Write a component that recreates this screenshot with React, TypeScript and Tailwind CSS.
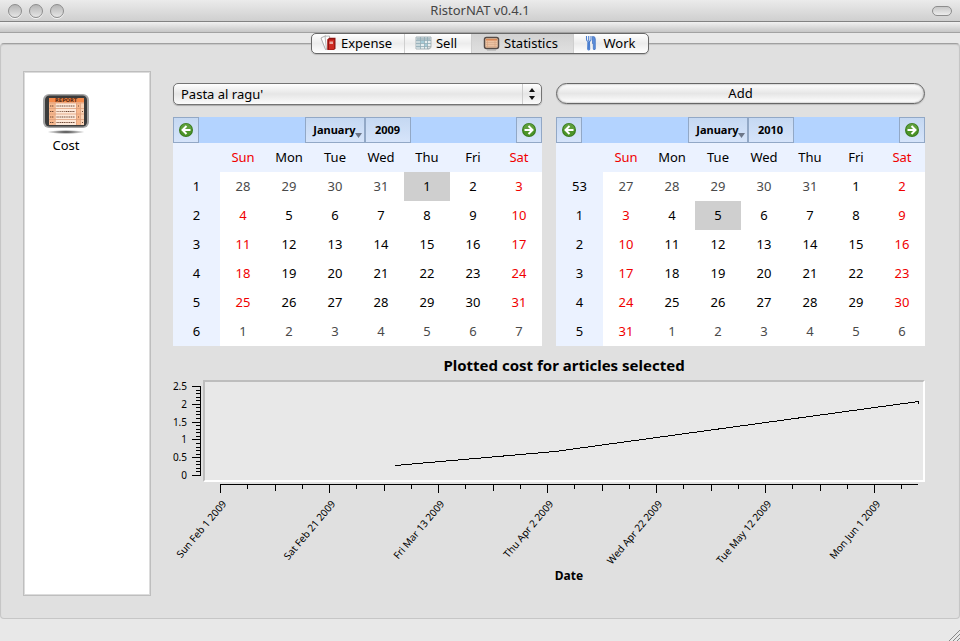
import React from "react";

function ExpenseIcon() {
  return (
    <svg width="17" height="16" viewBox="0 0 17 16" aria-hidden="true">
      <path d="M1 3 5.500 .8 9.500 12 5.500 14.500Z" fill="#fff" stroke="#999" strokeWidth=".8" />
      <path d="M5 1.200 9.500 1 10.500 13 6.500 14.500Z" fill="#fafafa" stroke="#aaa" strokeWidth=".8" />
      <path d="M7.500 4.500 9 2.800H15.500V13.500L14 15H7.500Z" fill="#8e1512" />
      <path d="M7.500 4.500H14.200V14.500H7.500Z" fill="#cf2a22" />
      <path d="M9.500 6.500H13V9H9.500Z" fill="#e9a9a2" />
      <path d="M8.300 4.500V14.500" stroke="#7c0f0d" strokeWidth=".9" />
    </svg>
  );
}

function SellIcon() {
  return (
    <svg width="17" height="16" viewBox="0 0 17 16" aria-hidden="true">
      <path d="M1 2H16V12.500L14 14H1Z" fill="#e6eef0" stroke="#a9b4b8" />
      <path d="M1.500 2.500H15.500V5H1.500Z" fill="#aebfc5" />
      <path d="M1.500 5.500H5V13.500H1.500Z" fill="#c9d8dc" />
      <path d="M1 5.500H16M1 8.500H16M1 11.500H15M5.500 2V14M9.500 2V14M12.500 2V14" stroke="#8fabb5" strokeWidth=".8" />
      <path d="M6 6H9V8H6ZM10 9H12V11H10Z" fill="#a5ccd8" />
      <path d="M13 14V11.500H16Z" fill="#fff" stroke="#98a4a8" strokeWidth=".6" />
    </svg>
  );
}

function StatisticsIcon() {
  return (
    <svg width="17" height="16" viewBox="0 0 17 16" aria-hidden="true">
      <rect x="1.500" y="2.500" width="14" height="11" rx="2" fill="#edc3a2" stroke="#564c48" strokeWidth="1.500" />
      <path d="M3 4H14V5.500H3Z" fill="#d98654" />
      <path d="M3 7.500H14M3 9.500H14M3 11.500H14" stroke="#d5ab8d" strokeWidth=".7" />
      <path d="M4.500 6V12.500M12 6V12.500" stroke="#d9a17e" strokeWidth=".6" />
      <path d="M4 15H13" stroke="#999" strokeWidth=".8" />
    </svg>
  );
}

function WorkIcon() {
  return (
    <svg width="17" height="16" viewBox="0 0 17 16" aria-hidden="true">
      <path d="M4.500 1V4.500Q4.500 6 6 6.500L5.700 14Q6.700 16 7.700 14L7.400 6.500Q9 6 9 4.500V1M6.700 1V6" fill="none" stroke="#4b7fd0" strokeWidth="1.100" />
      <path d="M6.700 7V14.500" stroke="#4b7fd0" strokeWidth="1.800" />
      <path d="M10.500 1.500Q13.300 1 13.300 4V14Q12.300 16 11.300 14V8.500H10.500Z" fill="#5c8fdc" stroke="#3b6bbd" strokeWidth=".7" />
    </svg>
  );
}

function ReportIcon() {
  return (
    <svg width="48" height="42" viewBox="0 0 48 42" aria-hidden="true">
      <defs>
        <radialGradient id="report-shadow">
          <stop offset="0" stopColor="#333" />
          <stop offset="1" stopColor="#333" stopOpacity="0" />
        </radialGradient>
      </defs>
      <ellipse cx="24" cy="39" rx="19" ry="2" fill="url(#report-shadow)" />
      <rect x="1" y="1" width="46" height="34" rx="6" fill="#a4a4a4" />
      <rect x="3" y="2.500" width="42" height="31" rx="4.500" fill="#3b3b3b" />
      <rect x="7" y="5" width="35" height="27" fill="#fbd3b5" />
      <rect x="7" y="5" width="35" height="4.500" fill="#f58b4c" />
      <text x="24" y="9" textAnchor="middle" fontSize="5" fontWeight="700" className="font-['DejaVu_Sans']" fill="#5b2a12">REPORT</text>
      <path d="M7 10H12.500V32H7ZM34 10H38V32H34Z" fill="#f8b88d" />
      <path d="M14 10H34V32H14Z" fill="#fde9da" />
      <path d="M7 10H42M7 15.500H42M7 21H42M7 26.500H42M13 10V32M34.500 10V32M38.500 10V32" stroke="#dda07c" strokeWidth=".8" />
      <path d="M8 13H12M8 18.500H12M8 24H12M8 29.500H12M14.500 13H33M24 18.500H33M14.500 24H33M14.500 29.500H33M36 13H37M40 18.500H41M36 24H37M40 29.500H41" stroke="#6d4734" strokeWidth="1.200" strokeDasharray="1.200 .6" />
      <path d="M14.500 18.500H24" stroke="#94705c" strokeWidth="1.200" strokeDasharray="1.200 .6" />
    </svg>
  );
}

function ArrowIcon({ right = false }: { right?: boolean }) {
  return (
    <svg width="16" height="16" viewBox="0 0 16 16" aria-hidden="true">
      <circle cx="8" cy="8" r="7" fill="#377a1c" />
      <circle cx="8" cy="8" r="6" fill="#4c9428" />
      <path d="M2.500 7A5.500 5.500 0 0 1 13.500 7Q8 9 2.500 7Z" fill="#6ba648" opacity=".6" />
      <path
        d={right ? "M3.500 8H11M7.500 4 11.500 8 7.500 12" : "M12.500 8H5M8.500 4 4.500 8 8.500 12"}
        fill="none"
        stroke="#fff"
        strokeWidth="2"
      />
    </svg>
  );
}

const tabs = [
  { label: "Expense", icon: <ExpenseIcon />, box: "w-[92px]" },
  { label: "Sell", icon: <SellIcon />, box: "w-[67px]" },
  { label: "Statistics", icon: <StatisticsIcon />, box: "w-[102px]" },
  { label: "Work", icon: <WorkIcon />, box: "w-[75px]" },
];

const dayNames = ["Sun", "Mon", "Tue", "Wed", "Thu", "Fri", "Sat"];

type CalendarProps = { year: number; weeks: number[]; first: number; previousLast: number; selected: number };

const navButton = "flex h-[26px] w-[26px] items-center justify-center border border-[#92a8c6] bg-linear-to-b from-[#c5d8f2] to-[#d6e4fa]";
const titleButton = "relative h-[26px] border border-[#92a8c6] bg-linear-to-b from-[#c5d8f2] to-[#d6e4fa] text-[11px] font-bold";

function Calendar({ year, weeks, first, previousLast, selected }: CalendarProps) {
  return (
    <section className="min-w-0" aria-label={`January ${year}`}>
      <div className="flex justify-between bg-[#b3d3ff]">
        <button className={navButton} aria-label="Previous month"><ArrowIcon /></button>
        <div className="flex">
          <button className={`${titleButton} w-[60px]`}>
            January
            <svg className="absolute right-[2px] bottom-1" width="7" height="5" viewBox="0 0 7 5" aria-hidden="true">
              <path d="M0 0H7L3.500 5Z" fill="#6c7688" />
            </svg>
          </button>
          <button className={`${titleButton} w-[46px]`}>{year}</button>
        </div>
        <button className={navButton} aria-label="Next month"><ArrowIcon right /></button>
      </div>
      <table className="w-full table-fixed border-collapse bg-white text-center">
        <thead>
          <tr className="h-[29px] bg-[#ebf2ff]">
            <td className="w-[47px] p-0" />
            {dayNames.map((name, i) => (
              <th key={name} scope="col" className={`p-0 pb-[2px] font-normal ${i % 6 === 0 ? "text-[#f00000]" : ""}`}>{name}</th>
            ))}
          </tr>
        </thead>
        <tbody>
          {weeks.map((week, row) => (
            <tr key={week} className="h-[29px]">
              <th scope="row" className="bg-[#ebf2ff] p-0 pb-[2px] font-normal">{week}</th>
              {dayNames.map((name, col) => {
                const offset = row * 7 + col - first + 1;
                const outside = offset < 1 || offset > 31;
                const day = offset < 1 ? previousLast + offset : offset > 31 ? offset - 31 : offset;
                const color = outside ? "text-[#4a4a4a]" : col % 6 === 0 ? "text-[#f00000]" : "text-black";
                const fill = !outside && day === selected ? "bg-[#cfcfcf]" : "";
                return (
                  <td key={name} className="p-0">
                    <button className={`block h-[29px] w-full pb-[2px] ${color} ${fill}`}>{day}</button>
                  </td>
                );
              })}
            </tr>
          ))}
        </tbody>
      </table>
    </section>
  );
}

const dates = ["Sun Feb 1 2009", "Sat Feb 21 2009", "Fri Mar 13 2009", "Thu Apr 2 2009", "Wed Apr 22 2009", "Tue May 12 2009", "Mon Jun 1 2009"];
const costs = ["0", "0.5", "1", "1.5", "2", "2.5"];

function CostChart() {
  return (
    <svg className="block h-auto w-full overflow-visible" viewBox="0 0 752 190" role="img" aria-label="Cost by date">
      <rect x="30" y="0" width="722" height="102" fill="#fff" />
      <path d="M30 0H752L750 2H32V100L30 102Z" fill="#bdbdbd" />
      <rect x="32" y="2" width="718" height="98" fill="#e8e8e8" />
      <g stroke="#000" shapeRendering="crispEdges" fill="none">
        <path d="M27.500 6V96M47 104.500H745" />
        {Array.from({ length: 26 }, (_, i) => {
          const y = Math.round(95 - i * 3.56) + 0.5;
          return <path key={i} d={`M${i % 5 === 0 ? 19 : 23} ${y}H28`} />;
        })}
        {Array.from({ length: 26 }, (_, i) => {
          const x = Math.round(47 + i * 27.25) + 0.5;
          return <path key={i} d={`M${x} 104V${i % 4 === 0 ? 113 : i % 2 === 0 ? 111 : 109}`} />;
        })}
        <path d="M222 85.500 382 71.500 745.500 21.500V24" />
      </g>
      <g fontSize="10" fill="#000">
        {costs.map((cost, i) => (
          <text key={cost} x="14" y={99 - i * 18 + (i > 2 ? 1 : 0)} textAnchor="end">{cost}</text>
        ))}
        {dates.map((date, i) => (
          <text key={date} textAnchor="end" transform={`translate(${54 + i * 109} 124) rotate(-50)`}>{date}</text>
        ))}
      </g>
    </svg>
  );
}

const light = "h-[14px] w-[14px] rounded-full border border-[#8d8d8d] bg-linear-to-b from-[#b5b5b5] to-[#e6e6e6] shadow-[0_1px_0_#f5f5f5]";

export default function App() {
  return (
    <div className="flex min-h-screen flex-col bg-[#e8e8e8] font-['Noto_Sans','Lucida_Grande',sans-serif] text-[13px] leading-4 text-black">
      <header>
        <div className="grid h-[22px] grid-cols-[1fr_auto_1fr] items-center border-b border-[#838383] bg-linear-to-b from-[#ebebeb] to-[#cfcfcf] px-2">
          <div className="flex gap-[7px]">
            <button className={light} aria-label="Close" />
            <button className={light} aria-label="Minimize" />
            <button className={light} aria-label="Zoom" />
          </div>
          <h1 className="pb-[2px] text-[#454545]">RistorNAT v0.4.1</h1>
          <button aria-label="Toggle toolbar" className="h-[10px] w-5 justify-self-end rounded-full border border-[#8d8d8d] bg-linear-to-b from-[#c8c8c8] to-[#ececec]" />
        </div>
        <div className="h-[11px] border-b border-[#a2a2a2] bg-linear-to-b from-[#f2f2f2] to-[#c6c6c6]" />
      </header>

      <div role="tablist" className="relative z-10 -mb-[11px] flex justify-center">
        <div className="flex h-[21px] overflow-hidden rounded-[5px] border border-[#686868] bg-linear-to-b from-white via-[#ececec] to-white shadow-[0_1px_1px_#bbb]">
          {tabs.map((tab) => (
            <button
              key={tab.label}
              role="tab"
              aria-selected={tab.label === "Statistics"}
              className={`flex ${tab.box} items-center justify-center gap-1 border-l border-[#cfcfcf] pr-1 pb-[2px] first:border-l-0 ${tab.label === "Statistics" ? "bg-linear-to-b from-[#d2d2d2] to-[#e0e0e0]" : ""}`}
            >
              {tab.icon}
              {tab.label}
            </button>
          ))}
        </div>
      </div>

      <div className="flex grow rounded border border-[#c6c6c6] border-t-[#a0a0a0] bg-[#e0e0e0] pt-[27px] pr-[34px] pb-[22px] pl-[22px] shadow-[inset_0_1px_1px_#c6c6c6]">
        <nav className="w-32 shrink-0 border border-[#bebebe] bg-white pt-[21px] pl-[17px] shadow-[inset_0_0_0_1px_#dcdcdc]">
          <button className="flex w-[50px] flex-col items-center gap-[2px]">
            <ReportIcon />
            Cost
          </button>
        </nav>

        <main className="ml-[22px] min-w-0 grow pt-3">
          <div className="grid grid-cols-2 gap-x-[14px] gap-y-3">
            <div className="relative">
              <select
                aria-label="Article"
                className="h-[22px] w-full appearance-none rounded-[5px] border border-[#747474] bg-linear-to-b from-white via-[#e6e6e6] to-[#fbfbfb] px-[7px] shadow-[0_1px_1px_#aaa]"
              >
                <option>Pasta al ragu'</option>
              </select>
              <div className="pointer-events-none absolute inset-y-[1px] right-[2px] flex w-[18px] items-center justify-center border-l border-[#cdcdcd]">
                <svg width="6" height="12" viewBox="0 0 6 12" aria-hidden="true">
                  <path d="M0 4 3 0 6 4ZM0 8 3 12 6 8Z" fill="#111" />
                </svg>
              </div>
            </div>
            <button className="h-[21px] rounded-full border border-[#666] bg-linear-to-b from-white via-[#e6e6e6] to-white pb-[2px] shadow-[0_1px_1px_#bbb,inset_0_0_2px_#888]">Add</button>
            <Calendar year={2009} weeks={[1, 2, 3, 4, 5, 6]} first={4} previousLast={31} selected={1} />
            <Calendar year={2010} weeks={[53, 1, 2, 3, 4, 5]} first={5} previousLast={31} selected={5} />
          </div>
          <h2 className="mt-[11px] mb-[7px] pl-[30px] text-center text-[15px] font-bold">Plotted cost for articles selected</h2>
          <CostChart />
          <p className="-mt-[2px] pl-10 text-center text-[12px] font-bold">Date</p>
        </main>
      </div>

      <footer className="flex h-[22px] items-end justify-end">
        <svg width="12" height="12" viewBox="0 0 12 12" aria-hidden="true">
          <path d="M1 12 12 1M5 12 12 5M9 12 12 9" stroke="#888" fill="none" />
        </svg>
      </footer>
    </div>
  );
}
